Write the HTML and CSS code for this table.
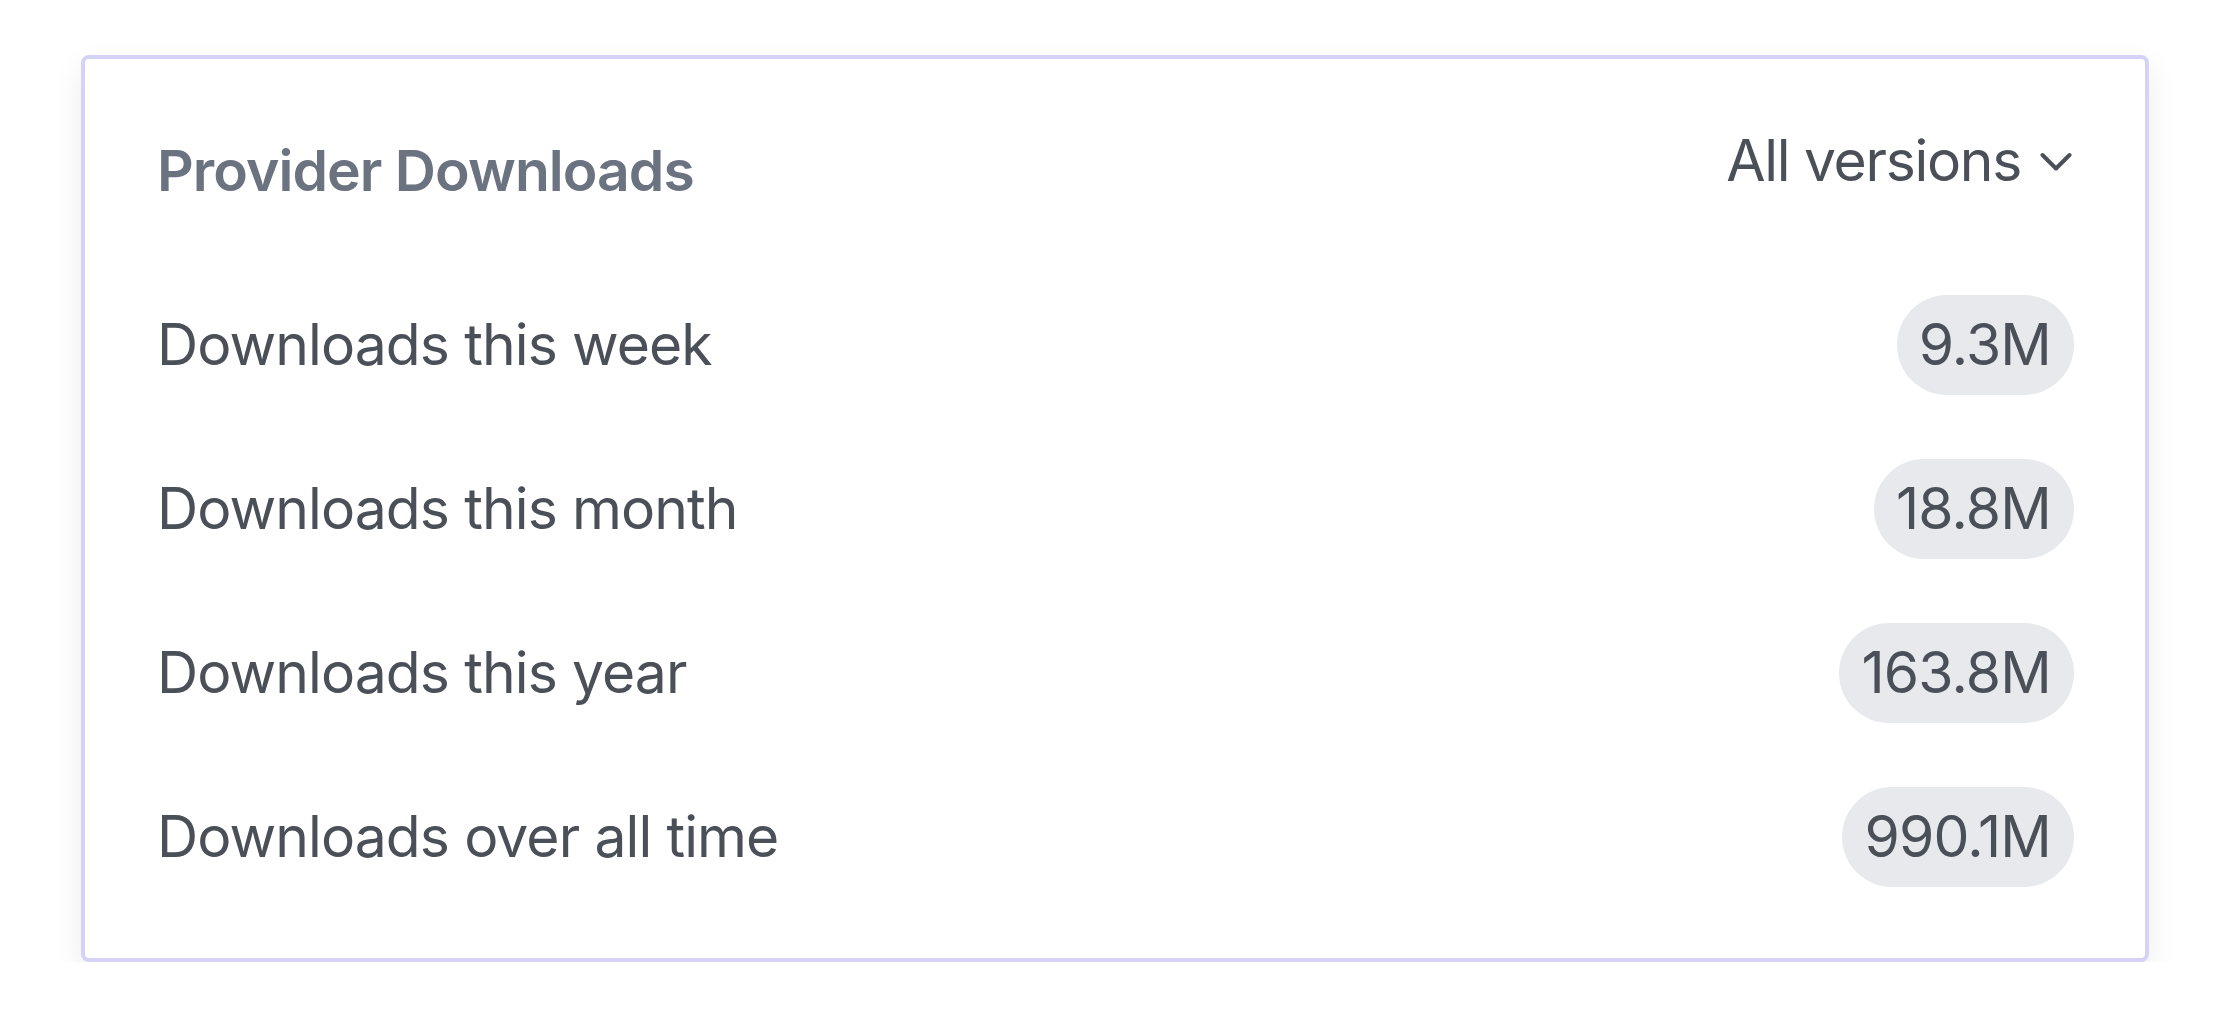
FILE: index.html
```html
<!DOCTYPE html>
<html lang="en">
<head>
<meta charset="utf-8">
<title>Provider Downloads</title>
<link rel="stylesheet" href="styles.css">
</head>
<body>
<section class="card">
  <header class="card-header">
    <h2 class="title">Provider Downloads</h2>
    <button class="dropdown" type="button">
      <span>All versions</span>
      <svg class="chevron" viewBox="0 0 32 20" width="32" height="20" aria-hidden="true">
        <path d="M2.5 3 L16 16.5 L29.5 3" fill="none" stroke="#4b4f58" stroke-width="4" stroke-linecap="round" stroke-linejoin="round"/>
      </svg>
    </button>
  </header>
  <ul class="stats">
    <li class="row"><span class="label">Downloads this week</span><span class="pill">9.3M</span></li>
    <li class="row"><span class="label">Downloads this month</span><span class="pill">18.8M</span></li>
    <li class="row"><span class="label">Downloads this year</span><span class="pill">163.8M</span></li>
    <li class="row"><span class="label">Downloads over all time</span><span class="pill">990.1M</span></li>
  </ul>
</section>
</body>
</html>
```

FILE: styles.css
```css
html, body {
  margin: 0;
  padding: 0;
  background: #ffffff;
}
body {
  font-family: Inter, "Noto Sans", "Liberation Sans", sans-serif;
  padding: 55px 75px 0 81px;
}
.card {
  box-sizing: border-box;
  width: 2068px;
  height: 907px;
  border: 4px solid #d4d2f6;
  border-radius: 8px;
  background: #fff;
  box-shadow: 0 12px 30px rgba(0, 0, 0, 0.08);
  padding: 68px 71px 71px 72px;
}
.card-header {
  display: flex;
  justify-content: space-between;
  align-items: flex-start;
  height: 77px;
}
.title {
  margin: 0;
  padding-top: 10px;
  font-size: 57px;
  line-height: 68px;
  font-weight: 600;
  letter-spacing: -0.95px;
  color: #6b7280;
}
.dropdown {
  display: flex;
  align-items: center;
  gap: 19px;
  margin: 0;
  padding: 0 2px 0 0;
  border: 0;
  background: none;
  font-family: inherit;
  font-size: 57px;
  line-height: 68px;
  font-weight: 400;
  letter-spacing: -1.3px;
  color: #4b4f58;
}
.chevron {
  display: block;
  margin-top: 2px;
}
.stats {
  list-style: none;
  margin: 91px 0 0;
  padding: 0;
  display: flex;
  flex-direction: column;
  gap: 64px;
}
.row {
  display: flex;
  justify-content: space-between;
  align-items: center;
  height: 100px;
}
.label {
  font-size: 57px;
  line-height: 68px;
  letter-spacing: -0.9px;
  color: #4b4f58;
}
.pill {
  display: flex;
  align-items: center;
  height: 100px;
  padding: 0 23px 0 22px;
  border-radius: 50px;
  background: #e7e9ed;
  font-size: 57px;
  line-height: 68px;
  letter-spacing: -0.8px;
  color: #4b4f58;
}
```
